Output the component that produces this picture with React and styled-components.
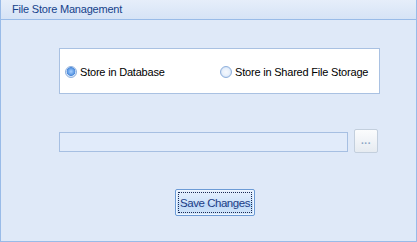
import React from "react";
import styled, { createGlobalStyle } from "styled-components";

const Global = createGlobalStyle`
  html, body { margin: 0; padding: 0; background: #dfe9f8; }
  * { box-sizing: border-box; }
`;

const Frame = styled.div`
  width: 417px;
  height: 242px;
  display: flex;
  flex-direction: column;
  background: #dfe9f8;
  border-left: 1px solid #99bbe8;
  border-right: 1px solid #99bbe8;
  border-bottom: 1px solid #99bbe8;
  font-family: "Liberation Sans", Arial, sans-serif;
  font-size: 11px;
  letter-spacing: -0.2px;
`;

const Header = styled.div`
  height: 20px;
  flex: none;
  display: flex;
  align-items: center;
  padding-left: 11px;
  padding-bottom: 1px;
  background: linear-gradient(#e6eefa, #d6e3f6);
  border-bottom: 1px solid #99bbe8;
  color: #15428b;
  font-size: 11px;
`;

const Body = styled.div`
  flex: 1;
  display: flex;
  flex-direction: column;
  padding: 28px 0 0 58px;
`;

const OptionsBox = styled.div`
  width: 321px;
  height: 46px;
  background: #fff;
  border: 1px solid #a9c1e2;
  display: flex;
  align-items: center;
  padding: 2px 0 0 5px;
`;

const Option = styled.label`
  display: flex;
  align-items: center;
  gap: 3px;
  color: #000;
  width: ${(p) => p.$w}px;
`;

const Radio = styled.span`
  width: 12px;
  height: 12px;
  border-radius: 50%;
  flex: none;
  border: 1px solid #8fb0dc;
  background: ${(p) =>
    p.$checked
      ? "radial-gradient(circle at 50% 45%, #a9d0ff 0, #6ea6ea 35%, #4d8bdc 55%, #cfe1f8 62%, #eef5fd 100%)"
      : "radial-gradient(circle at 50% 50%, #f6f9fd 0, #e8f0fb 50%, #c9dcf4 80%, #e9f1fb 100%)"};
`;

const FileRow = styled.div`
  display: flex;
  align-items: center;
  margin-top: 35px;
  height: 24px;
  gap: 6px;
`;

const PathInput = styled.div`
  width: 289px;
  height: 20px;
  border: 1px solid #a6bfe2;
  background: #e1ebfa;
  margin-top: 2px;
`;

const BrowseButton = styled.div`
  width: 24px;
  height: 24px;
  border: 1px solid #c3cfdd;
  border-radius: 2px;
  background: linear-gradient(#fbfcfd, #e6ebf1);
  color: #8aa4c4;
  display: flex;
  align-items: center;
  justify-content: center;
  font-size: 10px;
  font-weight: bold;
  letter-spacing: 0.5px;
  padding-bottom: 2px;
`;

const ButtonRow = styled.div`
  display: flex;
  margin-top: 36px;
  padding-left: 116px;
`;

const SaveButton = styled.button`
  width: 80px;
  height: 27px;
  padding: 2px;
  border: 1px solid #6c9bd6;
  border-radius: 2px;
  background: linear-gradient(#e7f1fd, #cfe3fa 50%, #bcd7f7 51%, #d4e7fb);
  box-shadow: inset 0 0 0 1px #eef6ff;
  font-family: "Liberation Sans", Arial, sans-serif;
  font-size: 11.5px;
  letter-spacing: -0.45px;
  white-space: nowrap;
  color: #1c3d85;
  cursor: pointer;
`;

const FocusRect = styled.span`
  display: flex;
  align-items: center;
  justify-content: center;
  width: 100%;
  height: 100%;
  border: 1px dotted #1a2a55;
  white-space: nowrap;
`;

export default function App() {
  return (
    <>
      <Global />
      <Frame>
        <Header>File Store Management</Header>
        <Body>
          <OptionsBox>
            <Option $w={156}>
              <Radio $checked />
              Store in Database
            </Option>
            <Option $w={160}>
              <Radio />
              Store in Shared File Storage
            </Option>
          </OptionsBox>
          <FileRow>
            <PathInput />
            <BrowseButton>...</BrowseButton>
          </FileRow>
          <ButtonRow>
            <SaveButton>
              <FocusRect>Save Changes</FocusRect>
            </SaveButton>
          </ButtonRow>
        </Body>
      </Frame>
    </>
  );
}
